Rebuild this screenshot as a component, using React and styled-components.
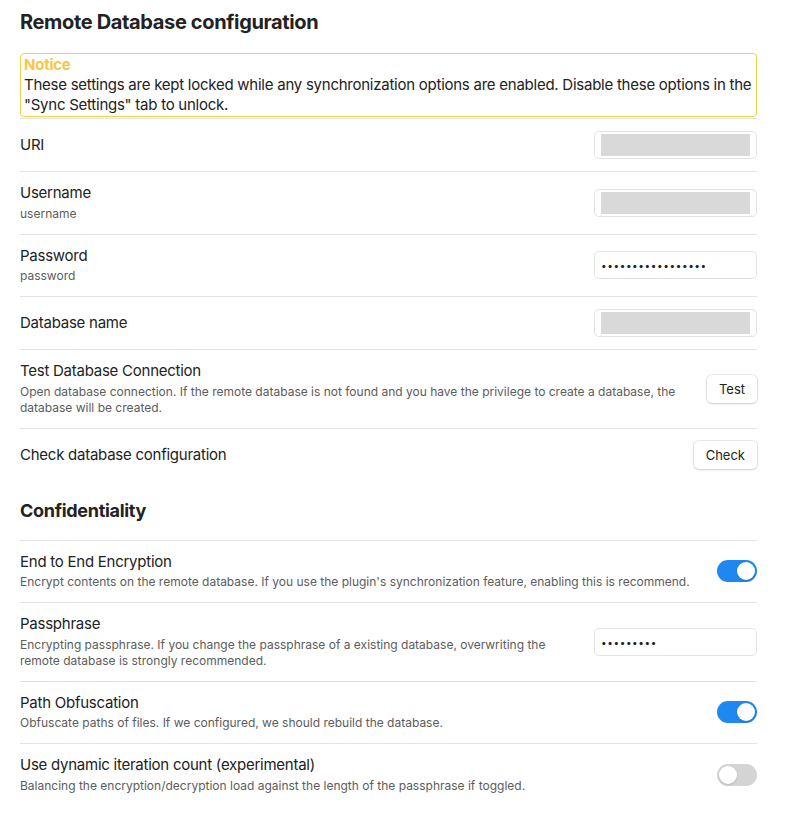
import styled, { createGlobalStyle } from "styled-components"

const Global = createGlobalStyle`
  body {
    margin: 0;
    background: #ffffff;
    font-family: Inter, "Noto Sans", sans-serif;
    color: #222222;
  }
`

const Page = styled.div`
  padding: 10px 31px 20px 20px;
`

const Title = styled.h2`
  margin: 0;
  font-size: 20px;
  line-height: 24px;
  font-weight: 700;
  letter-spacing: -0.35px;
  color: #222222;
`

const Notice = styled.div`
  margin: 19px 0 1px;
  border: 1px solid #f8cf4a;
  border-radius: 4px;
  padding: 1px 3px;
  font-size: 15px;
  line-height: 20px;
  letter-spacing: -0.25px;
  color: #222222;
`

const NoticeTitle = styled.div`
  color: #f7c744;
  font-weight: 700;
`

const Row = styled.div`
  display: flex;
  align-items: center;
  padding: 12px 0;
  border-top: 1px solid #e3e3e3;
  min-height: 28px;
`

const Info = styled.div`
  flex: 1 1 auto;
  margin-right: 16px;
`

const Name = styled.div`
  font-size: 15px;
  line-height: 18px;
  letter-spacing: -0.25px;
  color: #222222;
`

const Desc = styled.div`
  padding-top: 3.5px;
  font-size: 12px;
  line-height: 16px;
  color: #5c5c5c;
`

const Control = styled.div`
  flex: 0 0 auto;
  display: flex;
  align-items: center;
`

const Input = styled.div`
  box-sizing: border-box;
  width: 163px;
  height: 28px;
  border: 1px solid #e3e3e3;
  border-radius: 5px;
  background: #ffffff;
  padding: 4px 6px;
  display: flex;
  align-items: center;
`

const Redacted = styled.div`
  width: 100%;
  height: 22px;
  background: #d9d9d9;
`

const Dots = styled.span`
  font-size: 10px;
  letter-spacing: 0.6px;
  color: #222222;
`

const Button = styled.button`
  height: 28px;
  padding: 0 12px;
  font-family: inherit;
  font-size: 13px;
  color: #222222;
  background: #ffffff;
  border: none;
  border-radius: 5px;
  box-shadow: 0 0 0 1px rgba(0, 0, 0, 0.08), 0 1px 3px rgba(0, 0, 0, 0.12);
`

const Toggle = styled.div`
  position: relative;
  width: 40px;
  height: 22px;
  border-radius: 11px;
  background: ${p => (p.$on ? "#1e87f0" : "#d4d4d4")};
`

const Knob = styled.div`
  position: absolute;
  top: 2px;
  left: ${p => (p.$on ? "20px" : "2px")};
  width: 18px;
  height: 18px;
  border-radius: 50%;
  background: #ffffff;
  box-shadow: 0 1px 2px rgba(0, 0, 0, 0.15);
`

const SectionHead = styled.h3`
  margin: 0;
  padding: 18px 0 17px;
  font-size: 18px;
  line-height: 24px;
  font-weight: 700;
  letter-spacing: -0.3px;
  color: #222222;
`

const Switch = ({ on }) => (
  <Toggle $on={on}>
    <Knob $on={on} />
  </Toggle>
)

const Setting = ({ name, desc, children }) => (
  <Row>
    <Info>
      <Name>{name}</Name>
      {desc && <Desc>{desc}</Desc>}
    </Info>
    <Control>{children}</Control>
  </Row>
)

export default function App() {
  return (
    <Page>
      <Global />
      <Title>Remote Database configuration</Title>
      <Notice>
        <NoticeTitle>Notice</NoticeTitle>
        These settings are kept locked while any synchronization options are enabled. Disable these options in the "Sync Settings" tab to unlock.
      </Notice>
      <Setting name="URI">
        <Input><Redacted /></Input>
      </Setting>
      <Setting name="Username" desc="username">
        <Input><Redacted /></Input>
      </Setting>
      <Setting name="Password" desc="password">
        <Input><Dots>•••••••••••••••••</Dots></Input>
      </Setting>
      <Setting name="Database name">
        <Input><Redacted /></Input>
      </Setting>
      <Setting
        name="Test Database Connection"
        desc="Open database connection. If the remote database is not found and you have the privilege to create a database, the database will be created."
      >
        <Button>Test</Button>
      </Setting>
      <Setting name="Check database configuration">
        <Button>Check</Button>
      </Setting>
      <SectionHead>Confidentiality</SectionHead>
      <Setting
        name="End to End Encryption"
        desc="Encrypt contents on the remote database. If you use the plugin's synchronization feature, enabling this is recommend."
      >
        <Switch on />
      </Setting>
      <Setting
        name="Passphrase"
        desc="Encrypting passphrase. If you change the passphrase of a existing database, overwriting the remote database is strongly recommended."
      >
        <Input><Dots>•••••••••</Dots></Input>
      </Setting>
      <Setting
        name="Path Obfuscation"
        desc="Obfuscate paths of files. If we configured, we should rebuild the database."
      >
        <Switch on />
      </Setting>
      <Setting
        name="Use dynamic iteration count (experimental)"
        desc="Balancing the encryption/decryption load against the length of the passphrase if toggled."
      >
        <Switch />
      </Setting>
    </Page>
  )
}
